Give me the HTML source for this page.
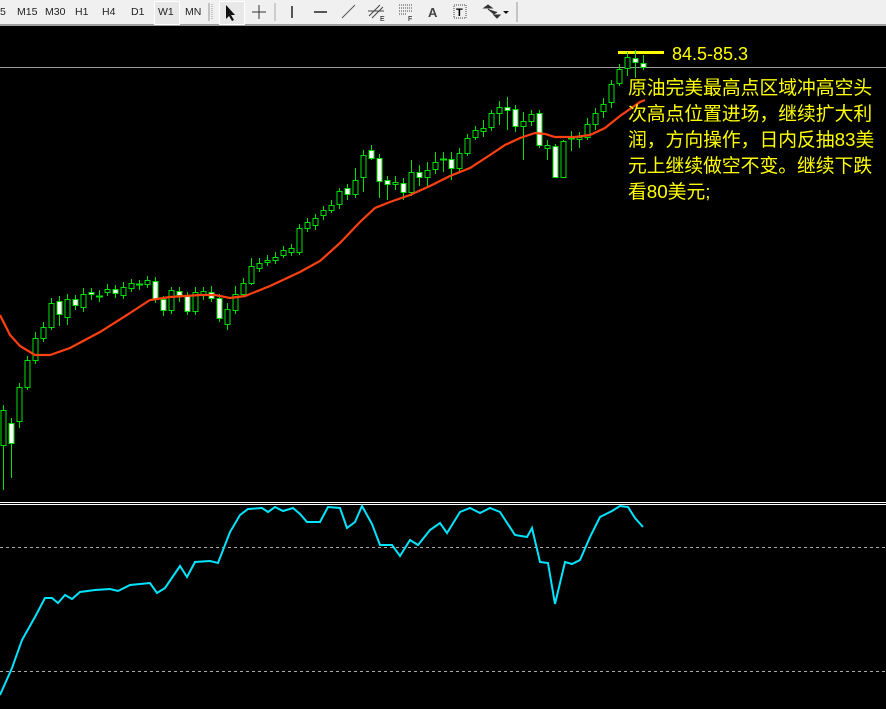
<!DOCTYPE html>
<html><head><meta charset="utf-8"><style>
*{margin:0;padding:0}
body{width:886px;height:709px;background:#000;overflow:hidden;position:relative;font-family:"Liberation Sans",sans-serif}
#tb{position:absolute;left:0;top:0;width:886px;height:24px;background:#f0f0f0;border-bottom:2px solid #a0a0a0;font-size:10.5px;color:#222}
#tb span{position:absolute;top:6px}
.sel{position:absolute;top:1px;height:22px;border:1px solid #fff;background:#e8e8e8}
#txt{position:absolute;left:628px;top:75px;color:#ffff00;font-family:"Liberation Sans","Noto Sans CJK SC",sans-serif;font-size:18.8px;line-height:26px;white-space:nowrap}
#lbl{position:absolute;left:672px;top:44px;color:#ffff00;font-size:18px}
</style></head><body>
<div id="tb">
<div class="sel" style="left:154px;width:24px"></div>
<div class="sel" style="left:219px;width:24px"></div>
<span style="left:0">5</span><span style="left:17px">M15</span><span style="left:45px">M30</span><span style="left:75px">H1</span><span style="left:102px">H4</span><span style="left:131px">D1</span><span style="left:158px">W1</span><span style="left:185px">MN</span>
<svg width="520" height="24" style="position:absolute;left:0;top:0">
<line x1="209" y1="3" x2="209" y2="21" stroke="#999"/><line x1="212" y1="4" x2="212" y2="20" stroke="#999" stroke-dasharray="1 1"/>
<path d="M226 5 L226 19 L229 16 L232 21 L234 20 L231 15 L235 15 Z" fill="#111"/>
<path d="M259 5V19M252 12H266" stroke="#333"/>
<line x1="275" y1="3" x2="275" y2="21" stroke="#aaa"/>
<line x1="292" y1="6" x2="292" y2="18" stroke="#222" stroke-width="1.5"/>
<line x1="314" y1="12" x2="327" y2="12" stroke="#222" stroke-width="1.5"/>
<line x1="342" y1="18" x2="355" y2="5" stroke="#555"/>
<path d="M369 16L380 5M372 18L383 7M368 11H384" stroke="#444"/><text x="380" y="21" font-size="7">E</text>
<path d="M399 5H413M399 8H413M399 11H413M399 14H406" stroke="#444" stroke-dasharray="1 1"/><text x="408" y="21" font-size="7">F</text>
<text x="428" y="17" font-size="13" font-weight="bold" fill="#444">A</text>
<rect x="454" y="5" width="12" height="13" fill="none" stroke="#444" stroke-dasharray="1 1"/><text x="456" y="16" font-size="11" font-weight="bold">T</text>
<path d="M484 8L488 5L492 8ZM488 9L494 14L497 12M494 15L497 18L500 15Z" fill="#333" stroke="#333"/>
<path d="M503 11H509L506 14Z" fill="#111"/>
<line x1="517" y1="2" x2="517" y2="22" stroke="#999"/>
</svg>
</div>
<svg id="ch" width="886" height="709" style="position:absolute;left:0;top:0"></svg>
<div id="lbl">84.5-85.3</div>
<div id="txt">原油完美最高点区域冲高空头<br>次高点位置进场，继续扩大利<br>润，方向操作，日内反抽83美<br>元上继续做空不变。继续下跌<br>看80美元;</div>
<script>
var c=[[445,410,405,490],[423,443,418,478],[421,387,383,428],[387,360,356,390],[360,338,332,364],[338,327,322,342],[327,303,298,330],[301,314,296,326],[317,299,294,325],[299,305,295,310],[307,294,288,312],[292,294,288,300],[296,296,290,302],[292,289,284,296],[289,293,285,298],[295,287,282,299],[288,283,279,292],[284,284,280,290],[284,280,276,288],[281,299,277,303],[299,310,296,316],[310,290,287,314],[291,295,287,302],[295,311,292,315],[311,292,287,315],[295,291,287,300],[292,298,286,302],[298,318,294,322],[324,309,303,330],[310,294,286,314],[294,283,278,297],[283,266,258,285],[268,263,258,272],[262,260,255,266],[260,257,252,264],[255,250,246,258],[252,248,244,256],[252,228,224,255],[228,222,218,232],[225,218,214,230],[215,210,206,220],[210,205,200,213],[204,191,188,209],[188,194,184,200],[194,180,168,198],[177,155,150,192],[150,158,145,160],[158,181,154,198],[180,184,176,200],[184,182,176,190],[183,192,178,200],[192,172,160,196],[172,177,165,186],[177,170,162,186],[169,162,152,174],[159,159,152,172],[159,168,152,180],[168,153,148,172],[153,138,134,156],[137,130,126,140],[131,128,120,137],[127,113,110,131],[113,107,101,125],[107,110,97,130],[109,126,105,132],[126,121,112,160],[121,114,110,126],[113,145,110,148],[148,145,140,160],[146,177,144,178],[177,141,140,178],[138,138,131,151],[139,137,132,148],[137,124,118,140],[124,113,108,130],[111,104,98,118],[102,84,80,108],[83,69,64,86],[68,57,52,76],[58,62,50,78],[63,67,55,70]];
var s='<line x1="0" y1="67.5" x2="886" y2="67.5" stroke="#9a9a9a"/>';
s+='<rect x="618" y="51" width="46" height="3" fill="#ffff00"/>';
c.forEach(function(d,i){var x=3+8*i,o=d[0],cl=d[1],t=Math.min(o,cl),b=Math.max(o,cl),bear=cl>o;
s+='<line x1="'+(x+.5)+'" y1="'+d[2]+'" x2="'+(x+.5)+'" y2="'+d[3]+'" stroke="#00e000"/>';
if(b-t<2)s+='<line x1="'+(x-3)+'" y1="'+(t+.5)+'" x2="'+(x+4)+'" y2="'+(t+.5)+'" stroke="#00e000" stroke-width="2"/>';
else s+='<rect x="'+(x-2)+'" y="'+(t+.5)+'" width="5" height="'+(b-t)+'" fill="'+(bear?'#fff':'#000')+'" stroke="#00e000"/>';});
s+='<polyline fill="none" stroke="#ff4010" stroke-width="2.2" points="0,315 10,335 20,346 35,355 50,355 70,348 100,332 130,313 150,300 170,297 200,295 215,295 230,298 245,296 270,286 300,272 320,261 340,243 360,222 375,208 390,202 410,195 430,186 450,176 470,168 490,155 505,145 520,138 535,133 545,134 555,137 575,137 590,135 605,128 620,116 640,102 645,100"/>';
s+='<line x1="0" y1="502.5" x2="886" y2="502.5" stroke="#fff"/><line x1="0" y1="504.5" x2="886" y2="504.5" stroke="#fff"/>';
s+='<line x1="0" y1="547.5" x2="886" y2="547.5" stroke="#aaa" stroke-dasharray="3 3"/><line x1="0" y1="671.5" x2="886" y2="671.5" stroke="#aaa" stroke-dasharray="3 3"/>';
s+='<polyline fill="none" stroke="#00e5ff" stroke-width="2" points="0,695 12,668 22,640 35,617 45,598 52,598 58,603 65,595 72,599 80,592 95,590 110,589 118,591 130,585 150,583 157,593 165,588 180,566 187,577 195,562 210,561 218,563 230,532 240,515 248,509 262,508 268,512 275,507 283,511 293,508 300,514 307,522 320,522 328,507 340,508 347,528 355,522 362,506 372,524 380,545 392,545 400,556 410,540 418,545 430,530 440,523 447,533 460,512 470,508 480,513 490,508 500,512 515,535 527,537 532,528 540,562 548,563 555,604 565,562 572,564 580,560 590,537 600,517 612,511 620,506 628,507 635,518 643,527"/>';
document.getElementById('ch').innerHTML=s;
</script>
</body></html>
